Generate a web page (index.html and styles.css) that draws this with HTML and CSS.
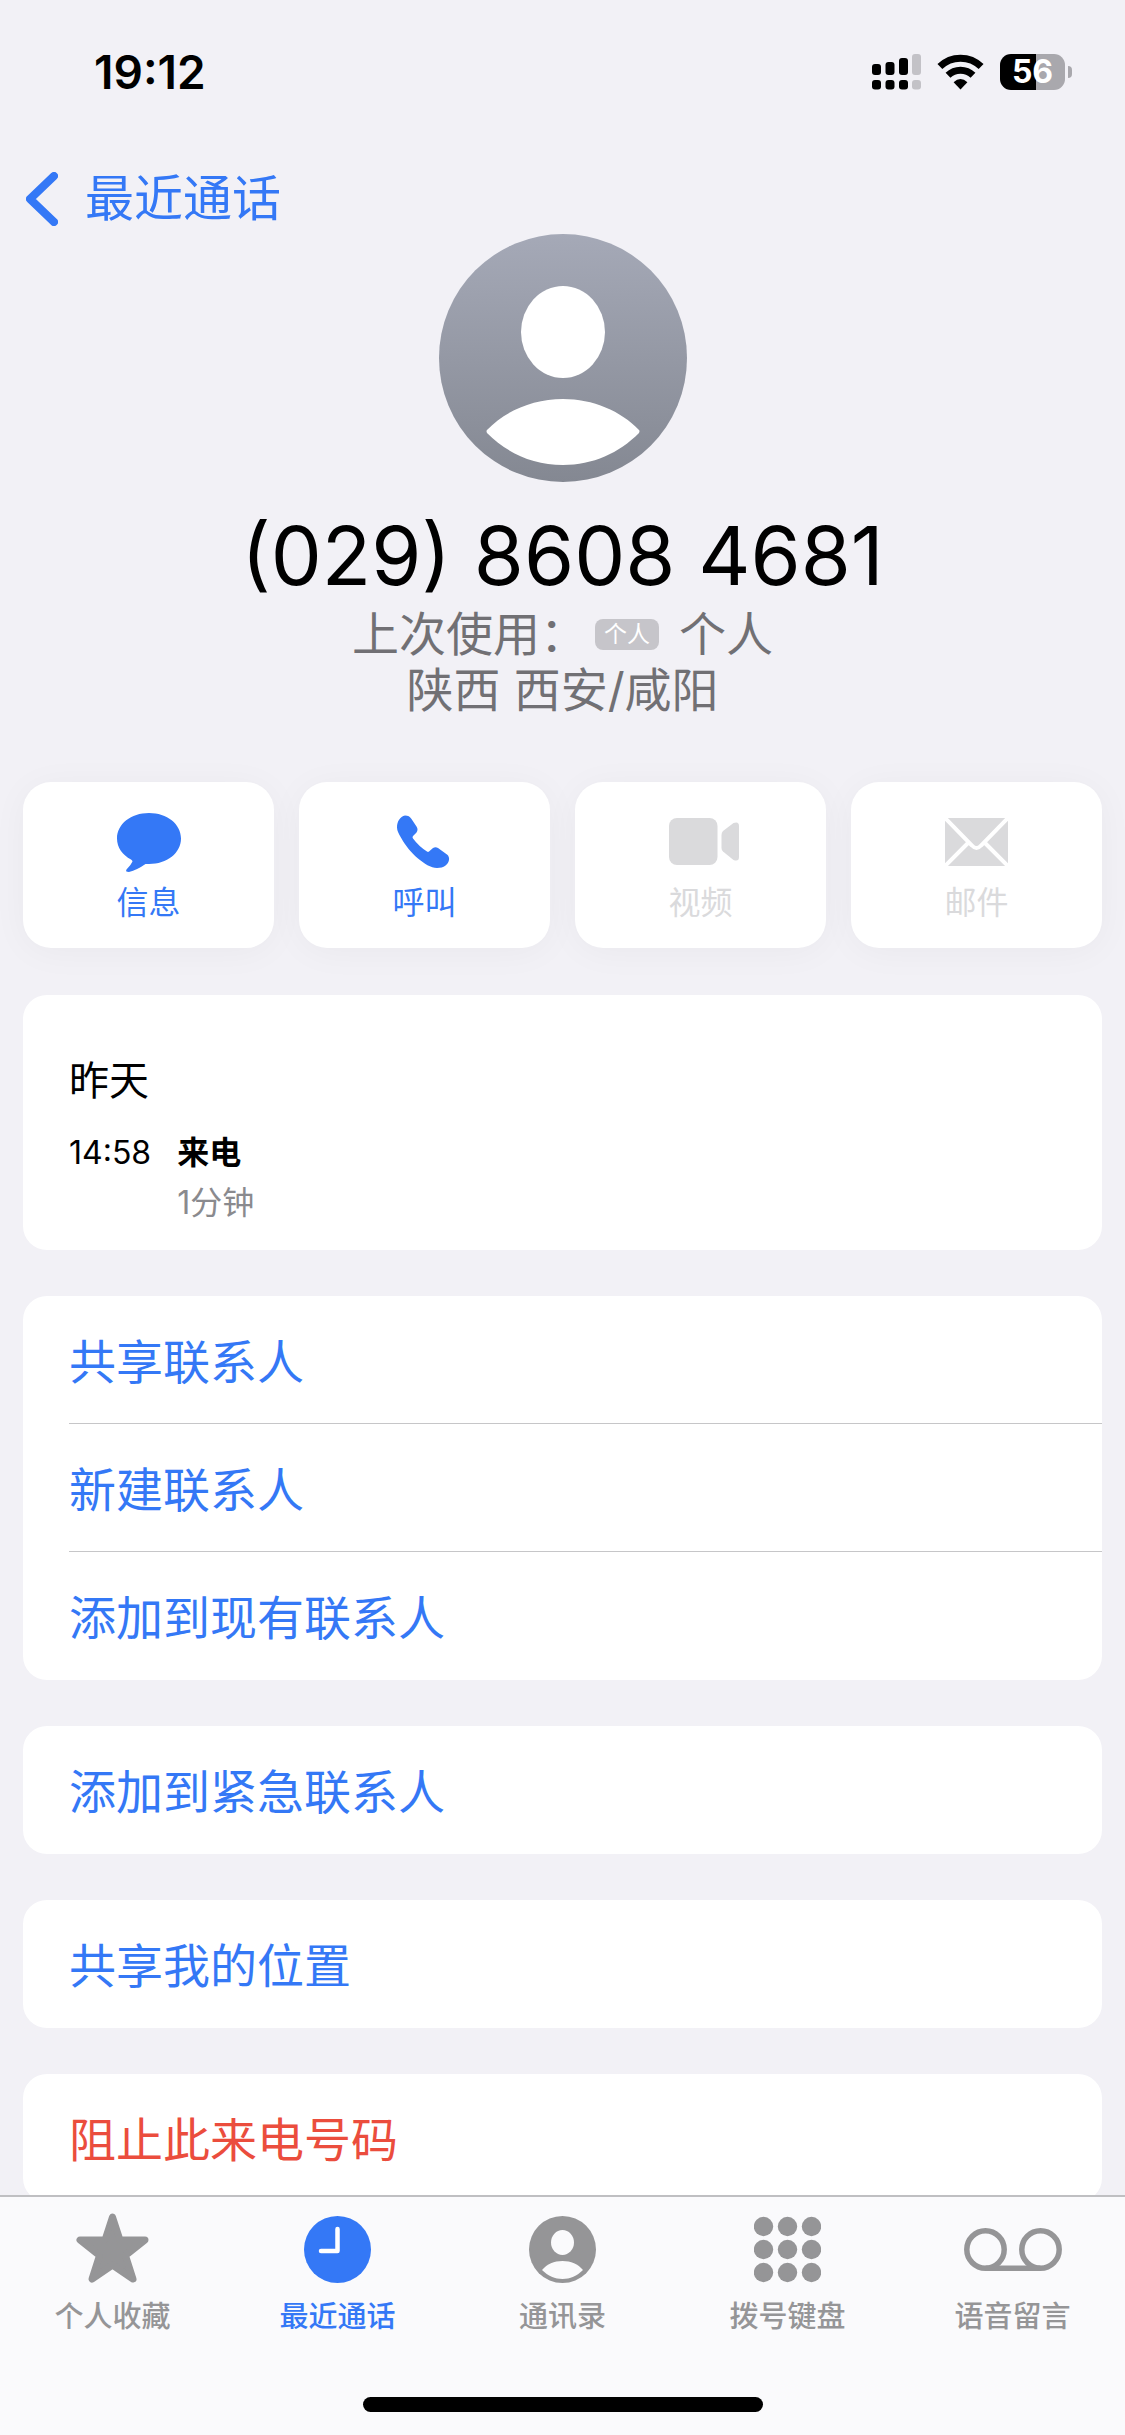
FILE: index.html
```html
<!DOCTYPE html>
<html lang="zh-CN">
<head>
  <meta charset="UTF-8">
  <meta name="viewport" content="width=device-width, initial-scale=1.0">
  <title>最近通话</title>
  <link rel="stylesheet" href="styles.css">
</head>
<body>
<div class="status-bar">
  <span class="time">19:12</span>
  <div class="status-icons">
    <svg class="signal" viewBox="0 0 49 36">
      <rect x="0" y="10" width="9" height="11" rx="3"/>
      <rect x="13.5" y="8" width="9" height="13" rx="3"/>
      <rect x="27" y="4" width="9" height="17" rx="3"/>
      <rect class="off" x="40" y="0" width="9" height="21" rx="3"/>
      <rect x="0" y="26" width="9" height="9.5" rx="3"/>
      <rect x="13.5" y="26" width="9" height="9.5" rx="3"/>
      <rect x="27" y="26" width="9" height="9.5" rx="3"/>
      <rect class="off" x="40" y="26" width="9" height="9.5" rx="3"/>
    </svg>
    <svg class="wifi" viewBox="0 0 47 36">
      <path d="M2.9 12.6a29.5 29.5 0 0 1 41.2 0M11 21.3a18 18 0 0 1 25 0" fill="none" stroke="#000" stroke-width="7"/>
      <path d="M23.5 35.5L16.6 28.2Q23.5 22 30.4 28.2Z"/>
    </svg>
    <div class="battery"><span class="battery-level">56</span></div>
  </div>
</div>

<nav class="nav-bar">
  <a class="back" href="#">
    <svg class="chevron" viewBox="0 0 32 54"><path d="M28 4L4 27L28 50"/></svg>
    最近通话
  </a>
</nav>

<main class="content">
  <header class="contact">
    <svg class="avatar" viewBox="0 0 248 248">
      <defs>
        <linearGradient id="avatarBg" x1="0" y1="0" x2="0" y2="1">
          <stop offset="0" stop-color="#a5a9b7"/>
          <stop offset="1" stop-color="#848892"/>
        </linearGradient>
      </defs>
      <circle cx="124" cy="124" r="124" fill="url(#avatarBg)"/>
      <ellipse cx="124" cy="98" rx="42" ry="46" fill="#fff"/>
      <path d="M48 196C66 177 94 165 124 165S182 177 200 196Q201 197 200 199C180 219 154 231 124 231S68 219 48 199Q47 197 48 196Z" fill="#fff"/>
    </svg>
    <h1 class="number">(029) 8608 4681</h1>
    <p class="detail">上次使用：<span class="badge">个人</span>个人</p>
    <p class="detail">陕西 西安/咸阳</p>
  </header>

  <div class="actions">
    <button class="action" type="button">
      <svg class="bubble" viewBox="0 0 64 60"><path d="M32 1C50 1 64 12 64 26.5S50 52 32 52Q30 52 28.500 52Q20 58 12 60Q8 60 9.500 57.500Q14 53 15.500 49.500Q15.500 48.500 14 47.500C5.500 43 0 35.500 0 26.500C0 12 14 1 32 1Z"/></svg>
      <span>信息</span>
    </button>
    <button class="action" type="button">
      <svg class="phone" viewBox="0 0 56 53"><path d="M0 12C0 6 3 1 8 0C11 0 13 1 14.500 3.500L19.500 11Q21.500 14 19.500 17L16 20.500Q15 21.500 16 23Q22 31 30 36Q31 36.800 32 36L36 32.500Q38.500 31 41 32.500L50 39Q52.500 41 52 44.500C51 49 47 52.500 40 52.500C34 52.500 27 48 21 43C14 37 8 29.500 4.500 23Q0 16 0 12Z"/></svg>
      <span>呼叫</span>
    </button>
    <button class="action" type="button" disabled>
      <svg class="video" viewBox="-6 0 76 48">
        <rect width="48.500" height="47" rx="8"/>
        <path d="M54 13L64.500 5Q70 3 70 8V39Q70 44 64.500 42L54 33.500Q52.500 32 52.500 30V17Q52.500 14.500 54 13Z"/>
      </svg>
      <span>视频</span>
    </button>
    <button class="action" type="button" disabled>
      <svg class="mail" viewBox="0 0 63 48">
        <rect width="63" height="48" rx="1"/>
        <path d="M-1 -1L27 27.500Q31.500 32.500 36 27.500L64 -1M-1 49L23 25M64 49L40 25" fill="none" stroke="#fff" stroke-width="4"/>
      </svg>
      <span>邮件</span>
    </button>
  </div>

  <section class="card history">
    <h2 class="day">昨天</h2>
    <div class="call">
      <time>14:58</time>
      <strong class="call-type">来电</strong>
      <span class="duration">1分钟</span>
    </div>
  </section>

  <section class="card">
    <button class="row" type="button">共享联系人</button>
    <button class="row" type="button">新建联系人</button>
    <button class="row" type="button">添加到现有联系人</button>
  </section>

  <section class="card">
    <button class="row" type="button">添加到紧急联系人</button>
  </section>

  <section class="card">
    <button class="row" type="button">共享我的位置</button>
  </section>

  <section class="card">
    <button class="row danger" type="button">阻止此来电号码</button>
  </section>
</main>

<footer class="bottom">
  <nav class="tabs">
    <a class="tab" href="#">
      <svg class="star" viewBox="0 3 73 67"><path d="M36.500 4L44 27H69L49.500 42.500L57 66L36.500 52L16 66L23.500 42.500L4 27H29Z" stroke="currentColor" stroke-width="7" stroke-linejoin="round"/></svg>
      <span>个人收藏</span>
    </a>
    <a class="tab active" href="#">
      <svg viewBox="0 0 67 67">
        <circle cx="33.500" cy="33.500" r="33.500"/>
        <path d="M33.500 13V35H17" fill="none" stroke="#fff" stroke-width="4.500" stroke-linecap="round" stroke-linejoin="round"/>
      </svg>
      <span>最近通话</span>
    </a>
    <a class="tab" href="#">
      <svg viewBox="0 0 67 67">
        <circle cx="33.500" cy="33.500" r="33.500"/>
        <ellipse cx="33.500" cy="26.500" rx="11.500" ry="12.500" fill="#fafafc"/>
        <path d="M13 54C18 48 25 45 33.500 45S49 48 54 54C48 60 41 63 33.500 63S19 60 13 54Z" fill="#fafafc"/>
      </svg>
      <span>通讯录</span>
    </a>
    <a class="tab" href="#">
      <svg viewBox="0 0 67 67">
        <circle cx="9.500" cy="10.500" r="9.700"/><circle cx="33.500" cy="10.500" r="9.700"/><circle cx="57.500" cy="10.500" r="9.700"/>
        <circle cx="9.500" cy="33.500" r="9.700"/><circle cx="33.500" cy="33.500" r="9.700"/><circle cx="57.500" cy="33.500" r="9.700"/>
        <circle cx="9.500" cy="56.500" r="9.700"/><circle cx="33.500" cy="56.500" r="9.700"/><circle cx="57.500" cy="56.500" r="9.700"/>
      </svg>
      <span>拨号键盘</span>
    </a>
    <a class="tab" href="#">
      <svg class="voicemail" viewBox="0 0 98 67">
        <g fill="none" stroke="currentColor" stroke-width="5.500">
          <circle cx="21.500" cy="33.500" r="18.700"/>
          <circle cx="76.500" cy="33.500" r="18.700"/>
          <path d="M21.500 52.200H76.500"/>
        </g>
      </svg>
      <span>语音留言</span>
    </a>
  </nav>
  <div class="home-indicator"></div>
</footer>
</body>
</html>
```
FILE: styles.css
```css
* {
  box-sizing: border-box;
}

body {
  margin: 0;
  height: 100vh;
  display: flex;
  flex-direction: column;
  overflow: hidden;
  background-color: #f2f1f6;
  color: #000;
  font-family: Inter, "Noto Sans CJK SC", sans-serif;
}

h1, h2, p {
  margin: 0;
  font-weight: 400;
}

svg {
  display: block;
  fill: currentColor;
}

a {
  color: inherit;
  text-decoration: none;
}

button {
  border: 0;
  padding: 0;
  background: none;
  font: inherit;
  color: #3478f6;
}

/* status bar */
.status-bar {
  flex: none;
  display: flex;
  align-items: center;
  justify-content: space-between;
  height: 144px;
  padding: 0 53px 0 94px;
}

.time {
  font-size: 46px;
  font-weight: 600;
}

.status-icons {
  display: flex;
  align-items: center;
  gap: 16px;
}

.signal {
  width: 49px;
  height: 36px;
}

.signal .off {
  fill: #c3c2c7;
}

.wifi {
  width: 47px;
  height: 36px;
}

.battery {
  display: flex;
  align-items: center;
  gap: 3px;
}

.battery-level {
  width: 65px;
  border-radius: 11px;
  background: linear-gradient(to right, #000 56%, #a9a8ad 56%);
  color: #fff;
  font-size: 32px;
  font-weight: 700;
  line-height: 36px;
  text-align: center;
}

.battery::after {
  content: "";
  width: 4px;
  height: 12px;
  border-radius: 0 6px 6px 0;
  background-color: #a9a8ad;
}

/* navigation */
.nav-bar {
  flex: none;
  display: flex;
  padding: 20px 26px 0;
}

.back {
  display: flex;
  align-items: center;
  gap: 27px;
  color: #3478f6;
  font-size: 49px;
  line-height: 70px;
}

.chevron {
  width: 32px;
  height: 54px;
  fill: none;
  stroke: currentColor;
  stroke-width: 8;
  stroke-linecap: round;
  stroke-linejoin: round;
}

/* contact */
.content {
  flex: 1;
  min-height: 0;
  overflow-y: auto;
  scrollbar-width: none;
  padding: 0 23px 46px;
}

.contact {
  display: flex;
  flex-direction: column;
  align-items: center;
  color: #717074;
}

.avatar {
  width: 248px;
  height: 248px;
  margin-bottom: 24px;
}

.number {
  color: #000;
  font-size: 81px;
  line-height: 100px;
}

.detail {
  display: flex;
  align-items: center;
  font-size: 47px;
  line-height: 56px;
}

.badge {
  margin: 0 20px 0 8px;
  padding: 0 9px;
  border-radius: 8px;
  background-color: #c6c5ca;
  color: #fff;
  font-size: 23px;
  line-height: 31px;
}

.actions {
  display: grid;
  grid-template-columns: repeat(4, 1fr);
  gap: 25px;
  margin: 64px 0 47px;
}

.action {
  display: flex;
  flex-direction: column;
  align-items: center;
  justify-content: space-between;
  height: 166px;
  padding: 30px 0 20px;
  border-radius: 28px;
  background-color: #fff;
  box-shadow: 0 4px 36px rgba(0, 0, 0, 0.04);
  font-size: 32px;
  line-height: 50px;
}

.action:disabled {
  color: #dadadc;
}

.bubble {
  width: 64px;
  height: 60px;
}

.phone {
  width: 56px;
  height: 60px;
}

.video {
  width: 76px;
  height: 60px;
}

.mail {
  width: 63px;
  height: 60px;
}

/* cards */
.card {
  margin-bottom: 46px;
  border-radius: 24px;
  background-color: #fff;
  overflow: hidden;
}

.history {
  padding: 56px 46px 22px;
}

.day {
  margin-bottom: 17px;
  font-size: 40px;
  line-height: 60px;
}

.call {
  display: grid;
  grid-template-columns: auto 1fr;
  column-gap: 26px;
  font-size: 32px;
  line-height: 50px;
}

.call-type {
  font-weight: 700;
}

.duration {
  grid-column: 2;
  color: #8a8a8e;
}

.row {
  display: block;
  width: calc(100% - 46px);
  height: 128px;
  margin-left: 46px;
  padding-top: 4px;
  font-size: 47px;
  line-height: 60px;
  text-align: left;
}

.row:not(:last-child) {
  border-bottom: 1px solid #c6c6c8;
}

.danger {
  color: #eb4d3d;
}

/* bottom tabs */
.bottom {
  flex: none;
  border-top: 2px solid #bfbfc2;
  background-color: #fafafc;
}

.tabs {
  display: grid;
  grid-template-columns: repeat(5, 1fr);
  padding-top: 19px;
}

.tab {
  display: flex;
  flex-direction: column;
  align-items: center;
  gap: 14px;
  color: #959597;
  font-size: 29px;
  font-weight: 500;
  line-height: 40px;
}

.tab svg {
  width: 67px;
  height: 67px;
}

.tab .star {
  width: 73px;
  overflow: visible;
}

.tab .voicemail {
  width: 98px;
}

.tab.active {
  color: #3478f6;
}

.home-indicator {
  width: 400px;
  height: 15px;
  margin: 60px auto 23px;
  border-radius: 8px;
  background-color: #000;
}
```
